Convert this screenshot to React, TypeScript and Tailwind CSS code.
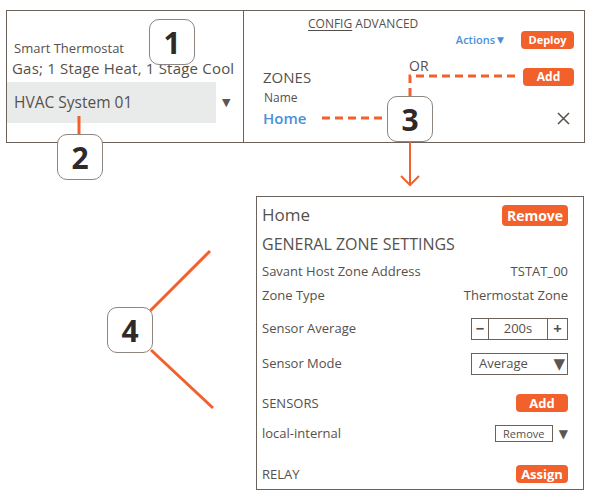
import React from "react";

const Btn: React.FC<{ label: string; className?: string }> = ({ label, className = "" }) => (
  <span
    className={`inline-flex items-center justify-center rounded-[4px] bg-[#f2602c] font-bold text-white ${className}`}
  >
    {label}
  </span>
);

const Callout: React.FC<{ n: string; className: string }> = ({ n, className }) => (
  <div
    className={`absolute flex h-[46px] w-[46px] items-center justify-center rounded-[10px] border border-[#8c8580] bg-white text-[30px] font-bold text-[#2f2a28] ${className}`}
  >
    {n}
  </div>
);

const Row: React.FC<{ label: string; children?: React.ReactNode; className?: string }> = ({
  label,
  children,
  className = "",
}) => (
  <div className={`flex items-center justify-between ${className}`}>
    <span className="text-[13px]">{label}</span>
    {children}
  </div>
);

export default function App() {
  return (
    <div
      className="relative h-[493px] w-[590px] overflow-hidden bg-white text-[#56504c]"
      style={{ fontFamily: '"Open Sans", "DejaVu Sans", sans-serif' }}
    >
      {/* top panels */}
      <div className="ml-[6px] mt-[10px] flex h-[133px] w-[579px] border border-[#6b625b]">
        <div className="flex w-[237px] flex-col border-r border-[#6b625b] pt-[29px]">
          <span className="pl-[7px] text-[13px] leading-[16px]">Smart Thermostat</span>
          <span className="mt-[2px] pl-[5px] text-[15px] leading-[20px] tracking-[0.2px]">Gas; 1 Stage Heat, 1 Stage Cool</span>
          <div className="mt-[4px] flex items-center">
            <div className="flex h-[41px] w-[209px] items-center bg-[#e9ebea] pl-[7px] text-[15.5px]">
              HVAC System 01
            </div>
            <span className="ml-[6px] text-[11px] text-[#5d5550]">▼</span>
          </div>
        </div>
        <div className="flex flex-1 flex-col pr-[10px]">
          <div className="pl-[64px] pt-[5px] text-[12px] leading-[16px]">
            <span className="underline underline-offset-2">CONFIG</span> ADVANCED
          </div>
          <div className="-mt-[1px] flex h-[18px] items-center justify-end">
            <span className="flex items-center text-[11px] font-semibold text-[#4a90d9]">
              Actions<span className="ml-[2px] text-[9px]">▼</span>
            </span>
            <Btn label="Deploy" className="ml-[17px] h-[18px] w-[53px] text-[11px]" />
          </div>
          <div className="mt-[19px] flex h-[18px] items-center justify-between pl-[19px]">
            <span className="text-[15px] leading-[20px]">ZONES</span>
            <Btn label="Add" className="h-[18px] w-[51px] text-[12px]" />
          </div>
          <span className="mt-[2px] pl-[20px] text-[12px] leading-[20px]">Name</span>
          <div className="flex h-[20px] items-center justify-between pl-[19px]">
            <span className="text-[15px] font-semibold text-[#4a90d9]">Home</span>
            <svg width="13" height="13" viewBox="0 0 13 13" className="mr-[4px]">
              <path d="M1 1 L12 12 M12 1 L1 12" stroke="#56504c" strokeWidth="1.5" />
            </svg>
          </div>
        </div>
      </div>

      {/* zone detail panel */}
      <div className="ml-[256px] mt-[53px] flex h-[294px] w-[328px] flex-col border border-[#6b625b] pl-[5px] pr-[15px]">
        <div className="mt-[8px] flex items-center justify-between">
          <span className="-mt-[3px] text-[17px]">Home</span>
          <Btn label="Remove" className="-mt-[2px] h-[21px] w-[66px] text-[14px]" />
        </div>
        <span className="mt-[6px] text-[16px] leading-[20px]">GENERAL ZONE SETTINGS</span>
        <Row label="Savant Host Zone Address" className="mt-[8px]">
          <span className="text-[13px]">TSTAT_00</span>
        </Row>
        <Row label="Zone Type" className="mt-[5px]">
          <span className="text-[13px]">Thermostat Zone</span>
        </Row>
        <Row label="Sensor Average" className="mt-[12px]">
          <div className="flex h-[22px] w-[97px] border border-[#6b625b] text-[13px]">
            <span className="flex w-[17px] items-center justify-center border-r border-[#6b625b] text-[15px] font-bold">−</span>
            <span className="flex flex-1 items-center justify-center">200s</span>
            <span className="flex w-[20px] items-center justify-center border-l border-[#6b625b] text-[15px] font-bold">+</span>
          </div>
        </Row>
        <Row label="Sensor Mode" className="mt-[13px]">
          <div className="flex h-[22px] w-[97px] items-center justify-between border border-[#6b625b] pl-[7px] pr-[2px] text-[13px]">
            <span>Average</span>
            <span className="text-[15px] text-[#5d5550]">▼</span>
          </div>
        </Row>
        <Row label="SENSORS" className="mt-[19px]">
          <Btn label="Add" className="h-[18px] w-[52px] text-[13px]" />
        </Row>
        <Row label="local-internal" className="mt-[11px]">
          <div className="flex items-center">
            <span className="flex h-[17px] w-[58px] items-center justify-center border border-[#6b625b] text-[11px]">
              Remove
            </span>
            <span className="ml-[6px] text-[12px] text-[#5d5550]">▼</span>
          </div>
        </Row>
        <Row label="RELAY" className="mt-[21px]">
          <Btn label="Assign" className="h-[18px] w-[52px] text-[13px]" />
        </Row>
      </div>

      {/* annotation connectors */}
      <svg className="pointer-events-none absolute left-0 top-0" width="590" height="493">
        <g stroke="#f2602c" strokeWidth="3" fill="none">
          <line x1="79" y1="116" x2="79" y2="134" />
          <path d="M322 118 H387" strokeDasharray="8 5" />
          <path d="M410 96 V76 H515" strokeDasharray="8 5" />
          <line x1="410" y1="141" x2="410" y2="184" strokeWidth="2" />
          <path d="M401 176 L410 185 L419 176" strokeWidth="2" />
          <line x1="150" y1="311" x2="210" y2="251" />
          <line x1="151" y1="350" x2="213" y2="408" />
        </g>
      </svg>
      <span className="absolute left-[409px] top-[57px] text-[14px] leading-[18px]">OR</span>

      <Callout n="1" className="left-[149px] top-[19px]" />
      <Callout n="2" className="left-[57px] top-[134px]" />
      <Callout n="3" className="left-[387px] top-[96px]" />
      <Callout n="4" className="left-[107px] top-[307px]" />
    </div>
  );
}
